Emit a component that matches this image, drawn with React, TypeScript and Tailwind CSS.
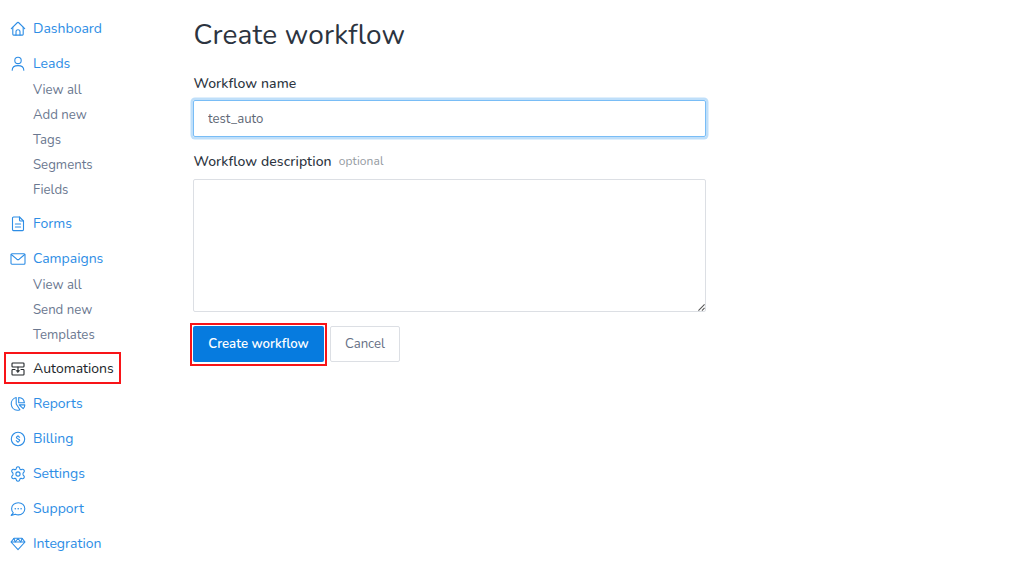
import React, { useState } from 'react'

interface INavItem {
    label: string
    icon: React.ReactNode
    active?: boolean
    children?: string[]
}

const Icon = ({ children }: { children: React.ReactNode }) => (
    <svg
        viewBox="0 0 16 16"
        className="w-4 h-4 shrink-0"
        fill="none"
        stroke="currentColor"
        strokeWidth={1.1}
        strokeLinecap="round"
        strokeLinejoin="round"
    >
        {children}
    </svg>
)

const navItems: INavItem[] = [
    {
        label: 'Dashboard',
        icon: (
            <Icon>
                <path d="M1.300 7.700 7.500 1.500a.75.75 0 0 1 1 0l6.200 6.200" />
                <path d="M2.800 6.300v7c0 .5.3.8.8.8h8.800c.5 0 .8-.3.8-.8v-7" />
                <path d="M6 14v-3.300a2 2 0 0 1 4 0V14" />
            </Icon>
        ),
    },
    {
        label: 'Leads',
        icon: (
            <Icon>
                <circle cx="8" cy="4.400" r="3.200" />
                <path d="M2.200 14.300c0-3 2.400-4.700 5.800-4.700s5.800 1.700 5.800 4.700" />
            </Icon>
        ),
        children: ['View all', 'Add new', 'Tags', 'Segments', 'Fields'],
    },
    {
        label: 'Forms',
        icon: (
            <Icon>
                <path d="M9.500 1H3.500a1 1 0 0 0-1 1v11.600a1 1 0 0 0 1 1h9a1 1 0 0 0 1-1V5z" />
                <path d="M9.500 1v3a1 1 0 0 0 1 1h3M5.400 8h5.200M5.400 11h5.200" />
            </Icon>
        ),
    },
    {
        label: 'Campaigns',
        icon: (
            <Icon>
                <rect x="1" y="2.700" width="14" height="10.500" rx="1" />
                <path d="m1.300 3.500 5.500 4.700a1.900 1.900 0 0 0 2.400 0l5.500-4.700" />
            </Icon>
        ),
        children: ['View all', 'Send new', 'Templates'],
    },
    {
        label: 'Automations',
        active: true,
        icon: (
            <Icon>
                <rect x="2" y="2" width="12" height="4" rx="0.800" />
                <path d="M5 8.500H2.800a.8.8 0 0 0-.8.8v3.900c0 .5.3.8.8.8h10.400c.5 0 .8-.3.8-.8V9.300a.8.800 0 0 0-.8-.8H11" />
                <path d="M8 6v4" />
                <path d="M6.300 9.500h3.400L8 11.500z" fill="currentColor" strokeWidth={0.5} />
            </Icon>
        ),
    },
    {
        label: 'Reports',
        icon: (
            <Icon>
                <path d="M6.200 1.500a6.500 6.500 0 0 0 1 12.800c1 0 1.900-.2 2.700-.6L6.200 8z" />
                <path d="M8.700 1.500v5.300h5.700a6 6 0 0 0-5.700-5.300z" />
                <path d="M9.200 8.900h5.600c0 1.500-.6 2.800-1.600 3.700z" />
            </Icon>
        ),
    },
    {
        label: 'Billing',
        icon: (
            <Icon>
                <circle cx="8" cy="8" r="6.700" />
                <path d="M9.600 6.300c-.3-.6-.9-.8-1.600-.8-.9 0-1.600.4-1.600 1.100 0 1.700 3.300 1 3.300 2.700 0 .8-.7 1.200-1.700 1.200-.9 0-1.500-.3-1.700-.9M8 4.600v.9M8 10.500v.9" />
            </Icon>
        ),
    },
    {
        label: 'Settings',
        icon: (
            <Icon>
                <circle cx="8" cy="8" r="2.100" />
                <path d="M6.200 2.700 6.500 1.700Q6.900.8 8 .8t1.500.9l.3 1q.4 1.100 1.500.9l1.100-.3q1-.1 1.600.8t.1 1.800l-.9 1q-.6 1.100 0 2.200l.9 1q.5.900-.1 1.800t-1.600.8l-1.100-.3q-1.100-.2-1.500.9l-.3 1q-.4.900-1.500.9t-1.500-.9l-.3-1q-.4-1.100-1.500-.9l-1.100.3q-1 .1-1.600-.8t-.1-1.800l.9-1q.6-1.100 0-2.200l-.9-1q-.5-.9.1-1.800t1.600-.8l1.100.3q1.100.2 1.500-.9z" />
            </Icon>
        ),
    },
    {
        label: 'Support',
        icon: (
            <Icon>
                <path d="M8.300 1.700c-3.800 0-6.700 2.700-6.700 6 0 1.600.6 3 1.700 4.100L1.200 14.400l4.200-1.100c.9.400 1.900.6 2.900.6 3.700 0 6.500-2.700 6.500-6.200s-2.800-6-6.500-6z" />
                <path d="M5.300 7.700h.01M8.200 7.700h.01M11.100 7.700h.01" strokeWidth={1.600} />
            </Icon>
        ),
    },
    {
        label: 'Integration',
        icon: (
            <Icon>
                <path d="M4 2.300h8l3 3.700-7 7.700L1 6zM1.200 6h13.600" />
                <path d="M3.800 2.500 5.300 6 8 2.500 10.700 6l1.500-3.500" />
            </Icon>
        ),
    },
]

const Sidebar = () => (
    <nav className="w-[193px] shrink-0 pt-[15px] pl-[10px] flex flex-col gap-2">
        {navItems.map((item) => (
            <div key={item.label}>
                <a
                    className={`relative flex items-center gap-[7px] h-[27px] text-[14px] ${item.active ? 'text-[#212529]' : 'text-[#2d8de5]'}`}
                >
                    {item.icon}
                    <span className="whitespace-nowrap">{item.label}</span>
                    {item.active && (
                        <span className="absolute left-[-6px] top-[-3px] w-[117px] h-8 border-2 border-[#f81418]" />
                    )}
                </a>
                {item.children?.map((child) => (
                    <a
                        key={child}
                        className="flex items-center h-[25px] pt-px pl-[23px] leading-5 text-[13.2px] text-[#6b7890]"
                    >
                        <span>{child}</span>
                    </a>
                ))}
            </div>
        ))}
    </nav>
)

const WorkflowForm = () => {
    const [name, setName] = useState<string>('test_auto')

    return (
        <main className="w-[513px] pt-[15px]">
            <h1 className="h-10 leading-10 pl-[0.5px] text-[28px] text-[#2c3440] whitespace-nowrap tracking-[0.15px]">
                Create workflow
            </h1>
            <label className="block mt-[18px] h-[22px] leading-[22px] pl-[0.5px] text-[14px] font-medium text-[#2c3440]">
                <span className="tracking-[0.08px]">Workflow name</span>
            </label>
            <input
                value={name}
                onChange={(e) => setName(e.target.value)}
                className="block mt-[5px] w-full h-[37px] px-[14px] rounded-[2px] border border-[#79bdf6] text-[13.2px] text-[#5f6876] outline-none shadow-[0_0_0_2.5px_#bfdffa]"
            />
            <label className="flex items-center mt-[13px] h-[22px] pl-[0.5px] text-[14px] font-medium text-[#2c3440]">
                <span className="tracking-[0.08px]">Workflow description</span>
                <span className="ml-[7px] text-[12px] font-normal text-[#949a9f] tracking-[0.1px]">optional</span>
            </label>
            <div className="relative mt-[7px]">
                <textarea className="block w-full h-[133px] rounded-[2px] border border-[#dcdfe4] resize-none outline-none" />
                <svg viewBox="0 0 8 8" className="absolute right-[1px] bottom-[1px] w-[7px] h-[7px]" stroke="#555" strokeWidth={1.2}>
                    <path d="M0.500 7.500 7.500 0.500M4.500 7.500l3-3" />
                </svg>
            </div>
            <div className="flex gap-[6px] mt-[14px]">
                <div className="relative">
                    <button className="block w-[131px] h-9 pt-px rounded-[2px] bg-[#067bdf] text-white text-[13.2px] font-semibold whitespace-nowrap">
                        <span>Create workflow</span>
                    </button>
                    <span className="absolute left-[-3px] top-[-3px] w-[137px] h-[43px] border-2 border-[#f81418]" />
                </div>
                <button className="w-[70px] h-9 pt-px rounded-[2px] border border-[#dcdfe4] text-[13.2px] text-[#667085]">
                    <span>Cancel</span>
                </button>
            </div>
        </main>
    )
}

export default function App() {
    return (
        <div className="flex w-full h-[565px] overflow-hidden bg-white font-[Nunito,Lato,'Open_Sans',sans-serif]">
            <Sidebar />
            <WorkflowForm />
        </div>
    )
}
